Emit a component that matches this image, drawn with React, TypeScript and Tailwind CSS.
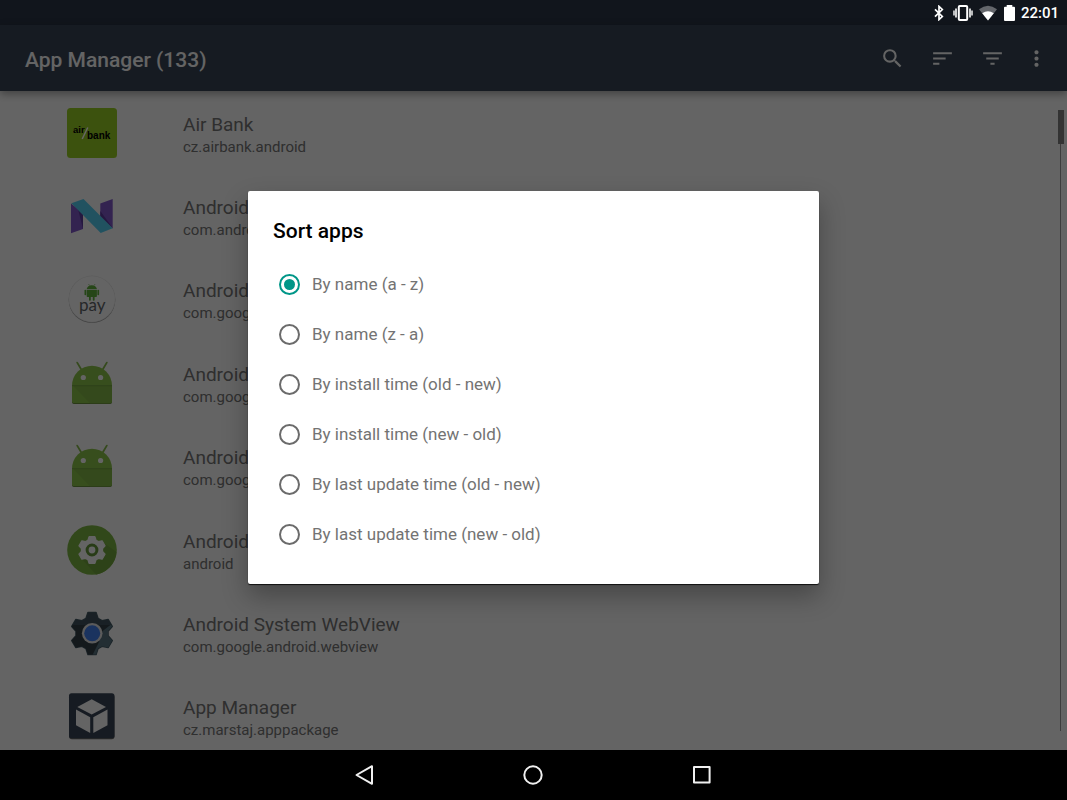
import { useState } from "react";
import type { ReactNode } from "react";
import { MdFilterList, MdMoreVert, MdSearch, MdSort } from "react-icons/md";

function gearPath(cx: number, cy: number, outer: number, inner: number, tip: number, base: number) {
  const points: string[] = [];
  for (let k = 0; k < 6; k++) {
    const mid = (k * Math.PI) / 3 - Math.PI / 2;
    const corners = [
      [inner, -base],
      [outer, -tip],
      [outer, tip],
      [inner, base],
    ];
    for (const [r, half] of corners) {
      const x = cx + r * Math.cos(mid) - half * Math.sin(mid);
      const y = cy + r * Math.sin(mid) + half * Math.cos(mid);
      points.push(`${x.toFixed(2)} ${y.toFixed(2)}`);
    }
  }
  return `M${points.join("L")}Z`;
}

const WEBVIEW_GEAR = gearPath(25, 25.5, 21, 15, 4, 6);
const SYSTEM_GEAR = gearPath(25, 25, 13.4, 9.8, 2.9, 4.1);

function AppIcon({ children }: { children: ReactNode }) {
  return (
    <svg viewBox="0 0 50 50" className="size-[50px] shrink-0" aria-hidden="true">
      {children}
    </svg>
  );
}

function AirBankIcon() {
  return (
    <AppIcon>
      <rect width="50" height="50" rx="3.5" fill="#96cc23" />
      <text x="6" y="25" fontSize="9.5" fontWeight="700" fontFamily="Liberation Sans, sans-serif" fill="#000">
        air
      </text>
      <text x="20" y="31" fontSize="10" fontWeight="700" fontFamily="Liberation Sans, sans-serif" fill="#000">
        bank
      </text>
      <path d="M20.8 19.5 15.2 31" stroke="#fff" strokeWidth="1.5" />
    </AppIcon>
  );
}

function NougatIcon() {
  return (
    <AppIcon>
      <path d="M4 12.5 16 22V38L4 42.3Z" fill="#8057c8" />
      <path d="M33.3 12.5 45.7 8V37.5L33.3 27Z" fill="#8057c8" />
      <path d="M11 18 16 23V38Z M33.3 20 45.7 37 33.3 26Z" fill="#5e3c9e" />
      <path d="M4.4 12.3 16.5 8 45.7 37.3 33.7 42Z" fill="#54cdf0" />
    </AppIcon>
  );
}

function AndroidPayIcon() {
  return (
    <AppIcon>
      <circle cx="25" cy="25.8" r="23.3" fill="#a0a0a0" />
      <circle cx="25" cy="25" r="23.4" fill="#e6e6e6" />
      <circle cx="25" cy="25" r="22.8" fill="#fafafa" />
      <g fill="#5fae3c">
        <path d="M19.7 15a5.2 4.8 0 0 1 10.2 0Z" />
        <path d="M19.7 15.8h10.2v6.5a.8.8 0 0 1-.8.8h-8.6a.8.8 0 0 1-.8-.8Z" />
        <rect x="17.5" y="15.8" width="1.7" height="5.4" rx=".8" />
        <rect x="30.4" y="15.8" width="1.7" height="5.4" rx=".8" />
        <rect x="22" y="22" width="1.8" height="4.7" rx=".8" />
        <rect x="25.8" y="22" width="1.8" height="4.7" rx=".8" />
      </g>
      <path d="m21.5 10 1 1.5M28.1 10l-1 1.5" stroke="#5fae3c" strokeWidth=".6" />
      <text x="25.3" y="37" textAnchor="middle" fontSize="17" fontFamily="Lato, sans-serif" fill="#5f6368">
        pay
      </text>
    </AppIcon>
  );
}

function DroidIcon() {
  return (
    <AppIcon>
      <path d="M5 27.5h40v16.6a2 2 0 0 1-2 2H7a2 2 0 0 1-2-2Z" fill="#5c7d36" />
      <path d="M10.2 4.6 14 11M39.8 4.6 36 11" stroke="#85b84a" strokeWidth="1.8" strokeLinecap="round" />
      <path d="M5 27.7a20 20 0 0 1 40 0Z" fill="#8bc34a" />
      <path d="M5 27.7h40v15.6a2 2 0 0 1-2 2H7a2 2 0 0 1-2-2Z" fill="#8bc34a" />
      <path d="M6 27.7h39v15.6a2 2 0 0 1-2 2H23Z" fill="#82b746" />
      <path d="M5 27.7h40" stroke="#6c993b" strokeWidth=".8" />
      <circle cx="16.3" cy="19.5" r="2.6" fill="#fafafa" />
      <circle cx="33.6" cy="19.5" r="2.6" fill="#fafafa" />
    </AppIcon>
  );
}

function AndroidSystemIcon() {
  return (
    <AppIcon>
      <circle cx="25" cy="25" r="24.8" fill="#7cb342" />
      <path d="m14 33 15 16.5a24.8 24.8 0 0 0 20.5-22.5L37 18Z" fill="#72a63c" />
      <path d={SYSTEM_GEAR} fill="#fafafa" stroke="#fafafa" strokeWidth="1.2" strokeLinejoin="round" />
      <circle cx="25" cy="25" r="4.9" fill="#fafafa" stroke="#64963a" strokeWidth="3" />
    </AppIcon>
  );
}

function WebViewIcon() {
  return (
    <AppIcon>
      <clipPath id="webview-gear">
        <path d={WEBVIEW_GEAR} />
      </clipPath>
      <path d={WEBVIEW_GEAR} fill="#37474f" stroke="#465c67" strokeWidth="1.6" strokeLinejoin="round" />
      <g clipPath="url(#webview-gear)">
        <rect width="50" height="50" fill="#40525c" />
        <path d="M0 17 50 17 24 50 0 50Z" fill="#323f47" />
        <path d="M33 25 50 12V50H24L33 32Z" fill="#587380" />
      </g>
      <circle cx="25.2" cy="25.3" r="10.3" fill="#e4e4e4" />
      <circle cx="25.2" cy="25.3" r="8" fill="#4280ee" />
    </AppIcon>
  );
}

function PackageIcon() {
  return (
    <AppIcon>
      <rect x="2" y="3.2" width="45.6" height="45" rx="3" fill="#686868" />
      <rect x="2" y="2.3" width="45.4" height="45" rx="2.5" fill="#374455" />
      <g fill="#fafafa">
        <path d="M24.7 8.3 39 16 24.7 23.6 10.3 16Z" />
        <path d="M9 18.6 23.2 26.3V42L9 34.3Z" />
        <path d="M26.3 26.3 40.5 18.6V34.3L26.3 42Z" />
      </g>
    </AppIcon>
  );
}

const APPS = [
  { name: "Air Bank", pkg: "cz.airbank.android", icon: <AirBankIcon /> },
  { name: "Android", pkg: "com.android", icon: <NougatIcon /> },
  { name: "Android", pkg: "com.google", icon: <AndroidPayIcon /> },
  { name: "Android", pkg: "com.google", icon: <DroidIcon /> },
  { name: "Android", pkg: "com.google", icon: <DroidIcon /> },
  { name: "Android", pkg: "android", icon: <AndroidSystemIcon /> },
  { name: "Android System WebView", pkg: "com.google.android.webview", icon: <WebViewIcon /> },
  { name: "App Manager", pkg: "cz.marstaj.apppackage", icon: <PackageIcon /> },
];

const SORT_OPTIONS = [
  "By name (a - z)",
  "By name (z - a)",
  "By install time (old - new)",
  "By install time (new - old)",
  "By last update time (old - new)",
  "By last update time (new - old)",
];

function StatusBar() {
  return (
    <div className="flex h-[25px] shrink-0 justify-end bg-[#2b3546] pr-2 text-white">
      <div className="relative z-20 flex items-center">
        <svg viewBox="0 0 10 16" className="mr-[9px] h-4 w-[10px]" role="img" aria-label="Bluetooth">
          <path
            d="M1 4.300 8.300 11.500 5 14.600V1.400L8.300 4.500 1 11.700"
            fill="none"
            stroke="#fff"
            strokeWidth="1.7"
          />
        </svg>
        <svg viewBox="0 0 20 16" className="mr-[6px] h-4 w-5" role="img" aria-label="Vibrate">
          <rect x="5.8" y="1" width="8.4" height="14" rx="1" fill="none" stroke="#fff" strokeWidth="2" />
          <path d="M3 3.5v9M17 3.5v9" stroke="#fff" strokeWidth="1.6" />
          <path d="M1 5.5v5M19 5.5v5" stroke="#fff" strokeWidth="1.4" />
        </svg>
        <svg viewBox="0 0 18 16" className="mr-[7px] h-4 w-[18px]" role="img" aria-label="Wi-Fi">
          <path d="M9 15.5 0 4.2Q9-2.8 18 4.2Z" fill="#fff" fillOpacity=".35" />
          <path d="M9 15.5 3.2 8.2Q9 4.4 14.8 8.2Z" fill="#fff" />
        </svg>
        <svg viewBox="0 0 11 16" className="mr-[6px] h-4 w-[11px]" role="img" aria-label="Battery full">
          <path d="M2.7 0h5.6v1.7H10a1 1 0 0 1 1 1V15a1 1 0 0 1-1 1H1a1 1 0 0 1-1-1V2.7a1 1 0 0 1 1-1h1.7Z" fill="#fff" />
        </svg>
        <time className="pt-[2px] text-[15px] leading-[23px] font-medium">22:01</time>
      </div>
    </div>
  );
}

function Toolbar() {
  return (
    <header className="relative z-[1] flex h-[66px] shrink-0 items-center bg-[#374455] pr-3 pl-[25px] text-[#fafafa] shadow-[0_3px_8px_rgba(0,0,0,0.35)]">
      <h1 className="flex-1 pt-[3px] text-[21px] leading-[28px] font-medium">App Manager (133)</h1>
      <button type="button" aria-label="Search" className="flex h-[50px] w-[50px] items-center justify-center">
        <MdSearch className="size-[25px]" />
      </button>
      <button type="button" aria-label="Sort" className="flex h-[50px] w-[50px] items-center justify-center">
        <MdSort className="size-[25px]" />
      </button>
      <button type="button" aria-label="Filter" className="flex h-[50px] w-[50px] items-center justify-center">
        <MdFilterList className="size-[25px]" />
      </button>
      <button type="button" aria-label="More options" className="flex h-[50px] w-[38px] items-center justify-center">
        <MdMoreVert className="size-[25px]" />
      </button>
    </header>
  );
}

function AppList() {
  return (
    <main className="relative min-h-0 flex-1 overflow-hidden bg-[#fafafa]">
      <ul className="grid min-h-[667px] grid-rows-8">
        {APPS.map((app, i) => (
          <li key={i} className="flex items-center gap-[66px] pl-[67px]">
            {app.icon}
            <div className="pt-1">
              <div className="text-[19px] leading-[24px] text-[#757575]">{app.name}</div>
              <div className="text-[15px] leading-[20px] text-[#757575]">{app.pkg}</div>
            </div>
          </li>
        ))}
      </ul>
      <div className="absolute top-[19px] right-[3px] bottom-[19px] flex w-[6px] flex-col" aria-hidden="true">
        <div className="h-[34px] bg-[#808080]" />
        <div className="ml-[2px] w-px flex-1 bg-[#989898]" />
      </div>
    </main>
  );
}

function SortDialog() {
  const [selected, setSelected] = useState(0);
  return (
    <div className="absolute inset-0 z-10 flex items-center justify-center bg-black/60 pt-[25px]">
      <div
        role="dialog"
        aria-labelledby="sort-title"
        className="w-[571px] max-w-full rounded-[2px] bg-white px-[25px] py-[25px] shadow-[0_1px_1px_rgba(0,0,0,0.8),0_12px_26px_rgba(0,0,0,0.3)]"
      >
        <h2 id="sort-title" className="mb-[13px] text-[21px] leading-[30px] font-medium text-black">
          Sort apps
        </h2>
        <div role="radiogroup" aria-labelledby="sort-title">
          {SORT_OPTIONS.map((label, i) => (
            <label key={label} className="flex h-[50px] items-center gap-3 pl-[6px] text-[17px] leading-[24px] text-[#737373]">
              <input
                type="radio"
                name="sort"
                checked={selected === i}
                onChange={() => setSelected(i)}
                className="size-[21px] shrink-0 appearance-none rounded-full border-2 border-[#6b6b6b] bg-clip-content p-[3px] checked:border-[#009688] checked:bg-[#009688]"
              />
              {label}
            </label>
          ))}
        </div>
      </div>
    </div>
  );
}

function NavigationBar() {
  return (
    <nav aria-label="System" className="flex h-[50px] shrink-0 justify-center bg-black pr-px text-[#f0f0f0]">
      <button type="button" aria-label="Back" className="flex w-[169px] items-center justify-center">
        <svg viewBox="0 0 24 24" className="size-6" fill="none" stroke="currentColor" strokeWidth="2" strokeLinejoin="round">
          <path d="M4.5 12 20 3.2V20.8Z" />
        </svg>
      </button>
      <button type="button" aria-label="Home" className="flex w-[169px] items-center justify-center">
        <svg viewBox="0 0 24 24" className="size-6" fill="none" stroke="currentColor" strokeWidth="2">
          <circle cx="12" cy="12" r="8.7" />
        </svg>
      </button>
      <button type="button" aria-label="Recent apps" className="flex w-[169px] items-center justify-center">
        <svg viewBox="0 0 24 24" className="size-6" fill="none" stroke="currentColor" strokeWidth="2" strokeLinejoin="round">
          <rect x="4" y="4" width="15.6" height="15.6" />
        </svg>
      </button>
    </nav>
  );
}

export default function App() {
  return (
    <div className="flex h-screen flex-col overflow-hidden font-['Roboto',sans-serif]">
      <div className="relative flex min-h-0 flex-1 flex-col">
        <StatusBar />
        <Toolbar />
        <AppList />
        <SortDialog />
      </div>
      <NavigationBar />
    </div>
  );
}
